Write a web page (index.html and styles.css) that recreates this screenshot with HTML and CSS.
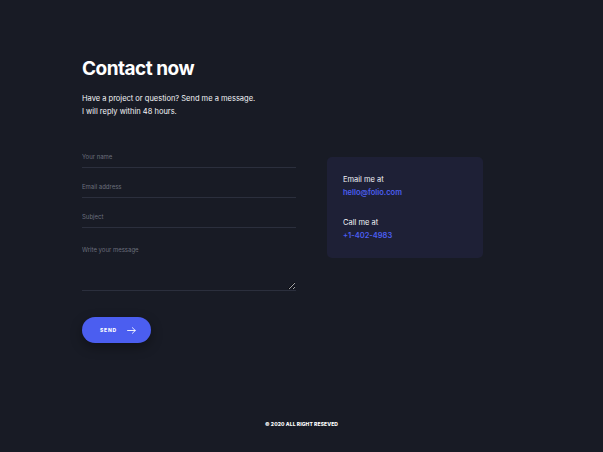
FILE: index.html
```html
<!DOCTYPE html>
<html lang="en">
<head>
    <meta charset="UTF-8">
    <meta name="viewport" content="width=device-width, initial-scale=1.0">
    <title>Contact now</title>
    <link rel="stylesheet" href="styles.css">
</head>
<body>
    <main class="contact">
        <h1>Contact now</h1>
        <p class="intro">Have a project or question? Send me a message.<br>I will reply within 48 hours.</p>
        <div class="contact-row">
            <form class="contact-form" onsubmit="return false;">
                <input type="text" placeholder="Your name" aria-label="Your name">
                <input type="email" placeholder="Email address" aria-label="Email address">
                <input type="text" placeholder="Subject" aria-label="Subject">
                <textarea placeholder="Write your message" aria-label="Message"></textarea>
                <button type="submit" class="send-btn">
                    SEND
                    <svg width="9" height="7" viewBox="0 0 10 8" fill="none" stroke="#ffffff" stroke-width="1" stroke-linecap="round" stroke-linejoin="round">
                        <path d="M0.5 4H9.3M6 0.8L9.3 4L6 7.2"/>
                    </svg>
                </button>
            </form>
            <aside class="info-card">
                <div class="info-item">
                    <span>Email me at</span>
                    <a href="#">hello@folio.com</a>
                </div>
                <div class="info-item">
                    <span>Call me at</span>
                    <a href="#">+1-402-4983</a>
                </div>
            </aside>
        </div>
    </main>
    <footer class="footer">&copy; 2020 ALL RIGHT RESEVED</footer>
</body>
</html>
```

FILE: styles.css
```css
body {
    margin: 0;
    font-family: Inter, "Noto Sans", sans-serif;
    background: #181b25;
    color: #ffffff;
    min-height: 452px;
}
.contact {
    padding: 56px 0 0 82px;
}
h1 {
    margin: 0;
    font-size: 19px;
    line-height: 26px;
    font-weight: 700;
    letter-spacing: -0.5px;
}
.intro {
    margin: 11px 0 0;
    font-size: 7.5px;
    line-height: 12.5px;
    color: #f4f5f8;
}
.contact-row {
    display: flex;
    align-items: flex-start;
    gap: 31px;
    margin-top: 27px;
}
.contact-form {
    display: flex;
    flex-direction: column;
    width: 214px;
}
.contact-form input,
.contact-form textarea {
    background: transparent;
    border: none;
    border-bottom: 1px solid #2b2f3d;
    color: #ffffff;
    font-family: inherit;
    font-size: 6px;
    padding: 0;
    margin: 0 0 7px;
    outline: none;
}
.contact-form input {
    height: 22px;
}
.contact-form textarea {
    height: 56px;
    padding-top: 11px;
    box-sizing: border-box;
    resize: vertical;
    margin-bottom: 26px;
}
.contact-form ::placeholder {
    color: #6b6f7d;
}
.send-btn {
    display: flex;
    align-items: center;
    gap: 10px;
    width: 69px;
    height: 26px;
    padding: 0 0 0 18px;
    border: none;
    border-radius: 13px;
    background: #4b5ef0;
    color: #ffffff;
    font-family: inherit;
    font-size: 5px;
    font-weight: 800;
    letter-spacing: 0.8px;
    box-shadow: 0 4px 12px rgba(0, 0, 0, 0.35);
    cursor: pointer;
}
.info-card {
    width: 156px;
    box-sizing: border-box;
    padding: 16px 16px 16px;
    margin-top: 12px;
    background: #1e2036;
    border-radius: 5px;
    display: flex;
    flex-direction: column;
    gap: 17px;
}
.info-item span {
    display: block;
    font-size: 7.5px;
    line-height: 13px;
    color: #f2f3f7;
}
.info-item a {
    display: block;
    font-size: 7.5px;
    line-height: 13px;
    font-weight: 600;
    color: #4b5ef0;
    text-decoration: none;
}
.footer {
    text-align: center;
    font-size: 5px;
    font-weight: 800;
    letter-spacing: 0.1px;
    padding-top: 78px;
}
```
